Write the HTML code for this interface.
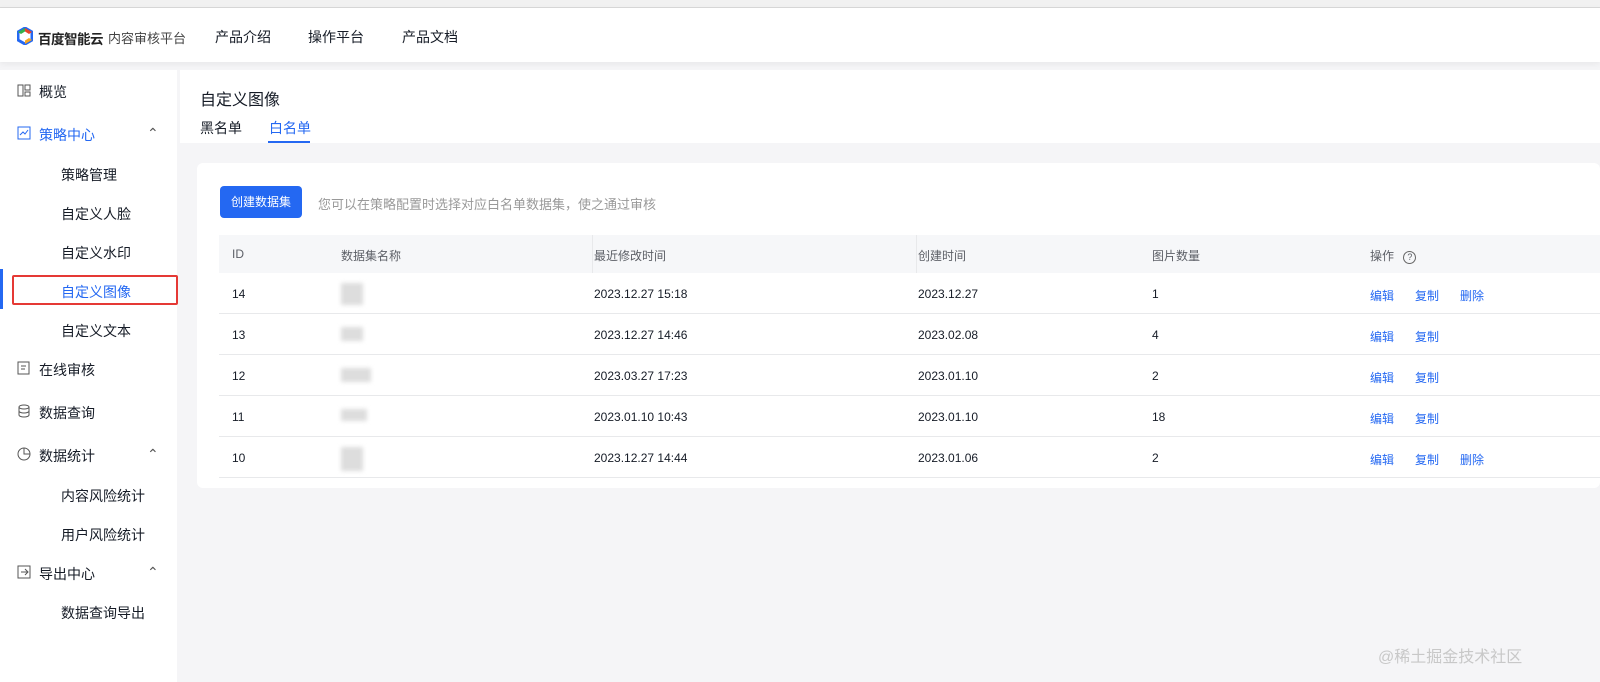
<!DOCTYPE html>
<html><head><meta charset="utf-8"><style>
*{margin:0;padding:0;box-sizing:border-box}
body{width:1600px;height:682px;overflow:hidden;background:#f5f5f7;font-family:"Liberation Sans","Noto Sans CJK SC",sans-serif;font-size:13px;color:#151b26;position:relative}
.abs{position:absolute}
.top{left:0;top:0;width:1600px;height:8px;background:#f1f1f1;border-bottom:1px solid #d8d8d8}
.hdr{left:0;top:8px;width:1600px;height:54px;background:#fff;box-shadow:0 2px 6px rgba(0,0,0,.06)}
.side{left:0;top:70px;width:177px;height:612px;background:#fff}
.si{position:absolute;font-size:14px;color:#151b26}
.sub{left:61px}
.main{left:180px;top:70px;width:1420px;height:73px;background:#fff}
.card{left:197px;top:163px;width:1403px;height:325px;background:#fff;border-radius:6px}
.th{top:235px;left:219px;width:1381px;height:38px;background:#f6f7f9}
.row{left:219px;width:1381px;height:41px;border-bottom:1px solid #e8e9eb}
.c{position:absolute;font-size:12px;color:#151b26}
.link{color:#2468f2}
.blur{background:#ddd;filter:blur(2px)}
</style></head><body>
<div class="abs top"></div>
<div class="abs hdr">
 <svg class="abs" style="left:17px;top:19px" width="16" height="18" viewBox="0 0 16 18"><path d="M8 1L15 5 15 13 8 17 1 13 1 5Z" fill="none" stroke="#2468f2" stroke-width="3"/><path d="M8 1L15 5 12 7 8 4.5Z" fill="#e7452b"/><path d="M1 5 8 1 8 4.5 4 7Z" fill="#35b24a"/><path d="M15 13 8 17 8 13.5 12 11Z" fill="#f6a623"/></svg>
 <div class="abs" style="left:38px;top:20px;font-size:13.5px;font-weight:bold;color:#222;letter-spacing:-0.5px">百度智能云</div>
 <div class="abs" style="left:108px;top:20px;font-size:13px;color:#444">内容审核平台</div>
 <div class="abs" style="left:215px;top:19px;font-size:14px">产品介绍</div>
 <div class="abs" style="left:308px;top:19px;font-size:14px">操作平台</div>
 <div class="abs" style="left:402px;top:19px;font-size:14px">产品文档</div>
</div>
<div class="abs side">
 <svg class="abs" style="left:17px;top:14px" width="14" height="13"><rect x="1" y="1" width="5" height="11" fill="none" stroke="#555"/><rect x="8" y="1" width="5" height="5" fill="none" stroke="#555"/><rect x="8" y="8" width="5" height="4" fill="none" stroke="#555"/></svg>
 <div class="si" style="left:39px;top:12px">概览</div>
 <svg class="abs" style="left:17px;top:56px" width="14" height="14"><rect x="1" y="1" width="12" height="12" fill="none" stroke="#2468f2"/><path d="M3 9 6 6 8 8 11 4" fill="none" stroke="#2468f2"/></svg>
 <div class="si" style="left:39px;top:55px;color:#2468f2">策略中心</div>
 <div class="si" style="left:147px;top:55px;color:#555">⌃</div>
 <div class="si sub" style="top:95px">策略管理</div>
 <div class="si sub" style="top:134px">自定义人脸</div>
 <div class="si sub" style="top:173px">自定义水印</div>
 <div class="abs" style="left:0;top:199px;width:3px;height:40px;background:#2468f2"></div>
 <div class="abs" style="left:12px;top:205px;width:166px;height:30px;border:2px solid #e53935;border-radius:2px"></div>
 <div class="si sub" style="top:212px;color:#2468f2">自定义图像</div>
 <div class="si sub" style="top:251px">自定义文本</div>
 <svg class="abs" style="left:17px;top:291px" width="14" height="14"><rect x="1" y="1" width="11" height="12" fill="none" stroke="#555"/><path d="M4 5h5M4 8h4" stroke="#555"/></svg>
 <div class="si" style="left:39px;top:290px">在线审核</div>
 <svg class="abs" style="left:17px;top:334px" width="14" height="14"><ellipse cx="7" cy="3" rx="5" ry="2" fill="none" stroke="#555"/><path d="M2 3v8c0 1 2 2 5 2s5-1 5-2V3M2 7c0 1 2 2 5 2s5-1 5-2" fill="none" stroke="#555"/></svg>
 <div class="si" style="left:39px;top:333px">数据查询</div>
 <svg class="abs" style="left:17px;top:377px" width="14" height="14"><circle cx="7" cy="7" r="6" fill="none" stroke="#555"/><path d="M7 1v6h6" fill="none" stroke="#555"/></svg>
 <div class="si" style="left:39px;top:376px">数据统计</div>
 <div class="si" style="left:147px;top:376px;color:#555">⌃</div>
 <div class="si sub" style="top:416px">内容风险统计</div>
 <div class="si sub" style="top:455px">用户风险统计</div>
 <svg class="abs" style="left:17px;top:495px" width="14" height="14"><rect x="1" y="1" width="12" height="12" fill="none" stroke="#555"/><path d="M4 7h7M8 4l3 3-3 3" fill="none" stroke="#555"/></svg>
 <div class="si" style="left:39px;top:494px">导出中心</div>
 <div class="si" style="left:147px;top:494px;color:#555">⌃</div>
 <div class="si sub" style="top:533px">数据查询导出</div>
</div>
<div class="abs main">
 <div class="abs" style="left:20px;top:16px;font-size:16px">自定义图像</div>
 <div class="abs" style="left:20px;top:48px;font-size:14px">黑名单</div>
 <div class="abs" style="left:89px;top:48px;font-size:14px;color:#2468f2">白名单</div>
 <div class="abs" style="left:88px;top:71px;width:42px;height:2px;background:#2468f2"></div>
</div>
<div class="abs card"></div>
<div class="abs" style="left:220px;top:186px;width:82px;height:32px;background:#2468f2;border-radius:4px;color:#fff;font-size:12px;text-align:center;line-height:32px">创建数据集</div>
<div class="abs" style="left:318px;top:194px;font-size:13px;color:#999">您可以在策略配置时选择对应白名单数据集，使之通过审核</div>
<div class="abs th">
 <div class="c" style="left:13px;top:12px;color:#5c5f66">ID</div>
 <div class="c" style="left:122px;top:12px;color:#5c5f66">数据集名称</div>
 <div class="c" style="left:375px;top:12px;color:#5c5f66">最近修改时间</div>
 <div class="c" style="left:699px;top:12px;color:#5c5f66">创建时间</div>
 <div class="c" style="left:933px;top:12px;color:#5c5f66">图片数量</div>
 <div class="c" style="left:1151px;top:12px;color:#5c5f66">操作 <span style="display:inline-block;width:13px;height:13px;border:1px solid #666;border-radius:50%;font-size:9px;text-align:center;line-height:11px;margin-left:6px">?</span></div>
 <div class="abs" style="left:373px;top:0;width:1px;height:38px;background:#e8e9eb"></div>
 <div class="abs" style="left:697px;top:0;width:1px;height:38px;background:#e8e9eb"></div>
</div>
<div class="abs row" style="top:273px"><div class="c" style="left:13px;top:14px">14</div><div class="c blur" style="left:122px;top:10px;width:22px;height:22px"></div><div class="c" style="left:375px;top:14px">2023.12.27 15:18</div><div class="c" style="left:699px;top:14px">2023.12.27</div><div class="c" style="left:933px;top:14px">1</div><div class="c link" style="left:1151px;top:14px">编辑</div><div class="c link" style="left:1196px;top:14px">复制</div><div class="c link" style="left:1241px;top:14px">删除</div></div>
<div class="abs row" style="top:314px"><div class="c" style="left:13px;top:14px">13</div><div class="c blur" style="left:122px;top:13px;width:22px;height:14px"></div><div class="c" style="left:375px;top:14px">2023.12.27 14:46</div><div class="c" style="left:699px;top:14px">2023.02.08</div><div class="c" style="left:933px;top:14px">4</div><div class="c link" style="left:1151px;top:14px">编辑</div><div class="c link" style="left:1196px;top:14px">复制</div></div>
<div class="abs row" style="top:355px"><div class="c" style="left:13px;top:14px">12</div><div class="c blur" style="left:122px;top:13px;width:30px;height:14px"></div><div class="c" style="left:375px;top:14px">2023.03.27 17:23</div><div class="c" style="left:699px;top:14px">2023.01.10</div><div class="c" style="left:933px;top:14px">2</div><div class="c link" style="left:1151px;top:14px">编辑</div><div class="c link" style="left:1196px;top:14px">复制</div></div>
<div class="abs row" style="top:396px"><div class="c" style="left:13px;top:14px">11</div><div class="c blur" style="left:122px;top:13px;width:26px;height:12px"></div><div class="c" style="left:375px;top:14px">2023.01.10 10:43</div><div class="c" style="left:699px;top:14px">2023.01.10</div><div class="c" style="left:933px;top:14px">18</div><div class="c link" style="left:1151px;top:14px">编辑</div><div class="c link" style="left:1196px;top:14px">复制</div></div>
<div class="abs row" style="top:437px"><div class="c" style="left:13px;top:14px">10</div><div class="c blur" style="left:122px;top:10px;width:22px;height:24px"></div><div class="c" style="left:375px;top:14px">2023.12.27 14:44</div><div class="c" style="left:699px;top:14px">2023.01.06</div><div class="c" style="left:933px;top:14px">2</div><div class="c link" style="left:1151px;top:14px">编辑</div><div class="c link" style="left:1196px;top:14px">复制</div><div class="c link" style="left:1241px;top:14px">删除</div></div>
<div class="abs" style="left:1378px;top:643px;font-size:16px;color:#c8c8c8">@稀土掘金技术社区</div>
</body></html>
